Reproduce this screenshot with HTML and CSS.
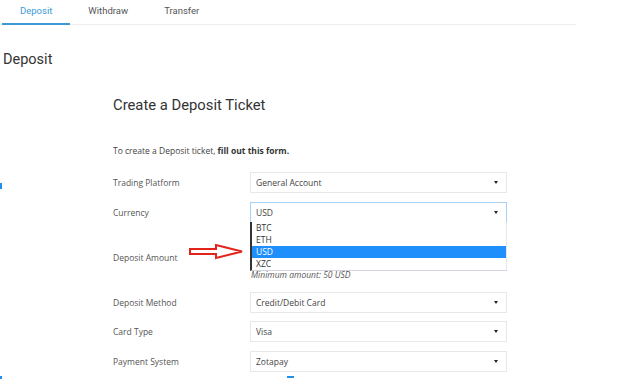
FILE: index.html
```html
<!DOCTYPE html>
<html lang="en">

<head>
    <meta charset="UTF-8">
    <meta name="viewport" content="width=device-width, initial-scale=1.0">
    <title>Deposit</title>
    <link rel="stylesheet" href="styles.css">
</head>

<body>
    <div class="tabs">
        <a class="tab active">Deposit</a>
        <a class="tab">Withdraw</a>
        <a class="tab">Transfer</a>
    </div>

    <h1 class="page-title">Deposit</h1>

    <div class="ticket">
        <h2>Create a Deposit Ticket</h2>
        <p class="intro">To create a Deposit ticket, <b>fill out this form.</b></p>

        <div class="row">
            <label>Trading Platform</label>
            <div class="select">General Account</div>
        </div>

        <div class="row">
            <label>Currency</label>
            <div class="field">
                <div class="select focused">USD</div>
                <ul class="options">
                    <li>BTC</li>
                    <li>ETH</li>
                    <li class="selected">USD</li>
                    <li>XZC</li>
                </ul>
            </div>
        </div>

        <div class="row amount">
            <label>Deposit Amount</label>
            <div class="field">
                <div class="input"></div>
                <div class="hint">Minimum amount: 50 USD</div>
            </div>
        </div>

        <div class="row">
            <label>Deposit Method</label>
            <div class="select">Credit/Debit Card</div>
        </div>

        <div class="row">
            <label>Card Type</label>
            <div class="select">Visa</div>
        </div>

        <div class="row">
            <label>Payment System</label>
            <div class="select">Zotapay</div>
        </div>
    </div>

    <svg class="pointer" width="58" height="16" viewBox="0 0 58 16">
        <polygon points="2,5 28,5 28,1 54,7.5 28,14 28,10 2,10" fill="#fff" stroke="#e3231c" stroke-width="2" stroke-linejoin="miter"/>
    </svg>

    <span class="mark mark-left"></span>
    <span class="mark mark-bottom-left"></span>
    <span class="mark mark-bottom"></span>
</body>

</html>
```

FILE: styles.css
```css
body {
    margin: 0;
    font-family: "Open Sans", Arial, sans-serif;
    color: #444;
    background: #fff;
}

.tabs {
    display: flex;
    width: 574px;
    padding-left: 2px;
    border-bottom: 1px solid #eeeeee;
    height: 24px;
}

.tab {
    padding: 4px 18px 0;
    height: 19px;
    font-family: Roboto, Arial, sans-serif;
    font-size: 9.5px;
    line-height: 13px;
    color: #555;
    cursor: pointer;
}

.tab.active {
    color: #3d9ad6;
    border-bottom: 2px solid #3d9ad6;
}

.page-title {
    margin: 26px 0 0 3px;
    font-family: Roboto, Arial, sans-serif;
    font-size: 14.5px;
    line-height: 17px;
    font-weight: 400;
    color: #333;
}

.ticket {
    margin-left: 113px;
    width: 394px;
}

.ticket h2 {
    margin: 29px 0 0;
    font-family: Roboto, Arial, sans-serif;
    font-size: 14.8px;
    line-height: 17px;
    font-weight: 400;
    color: #333;
}

.intro {
    margin: 31px 0 15px;
    font-size: 8.5px;
    line-height: 12px;
    color: #444;
}

.intro b {
    color: #333;
}

.row {
    display: flex;
    align-items: flex-start;
    margin-bottom: 8.7px;
    font-size: 8.5px;
}

.row label {
    width: 137px;
    flex-shrink: 0;
    line-height: 21px;
    color: #555;
}

.field {
    position: relative;
    width: 257px;
}

.select {
    position: relative;
    box-sizing: border-box;
    width: 257px;
    height: 21px;
    padding-left: 5px;
    line-height: 19px;
    border: 1px solid #e8e8e8;
    color: #444;
}

.select::after {
    content: "";
    position: absolute;
    right: 8px;
    top: 8px;
    border-left: 2.5px solid transparent;
    border-right: 2.5px solid transparent;
    border-top: 3px solid #222;
}

.select.focused {
    border-color: #a9d1f5;
}

.options {
    position: absolute;
    top: 20px;
    left: 0;
    z-index: 2;
    box-sizing: border-box;
    width: 257px;
    margin: 0;
    padding: 0;
    list-style: none;
    background: #fff;
    border-left: 2px solid #333;
    border-right: 1px solid #e6e6e6;
    border-bottom: 1px solid #cfd4e0;
}

.options li {
    height: 12px;
    padding-left: 4px;
    line-height: 12px;
    color: #333;
}

.options li.selected {
    background: #1e8ffb;
    color: #fff;
}

.row.amount {
    margin-top: 24px;
    margin-bottom: 11px;
}

.input {
    box-sizing: border-box;
    height: 21px;
    border: 1px solid #e8e8e8;
}

.hint {
    padding-left: 1px;
    font-style: italic;
    line-height: 13px;
    color: #555;
}

.pointer {
    position: absolute;
    left: 188px;
    top: 244px;
}

.mark {
    position: absolute;
    background: #1e90f0;
}

.mark-left {
    left: 0;
    top: 183px;
    width: 2px;
    height: 6px;
}

.mark-bottom-left {
    left: 0;
    top: 376px;
    width: 2px;
    height: 3px;
}

.mark-bottom {
    left: 287px;
    top: 376px;
    width: 7px;
    height: 2px;
}
```
